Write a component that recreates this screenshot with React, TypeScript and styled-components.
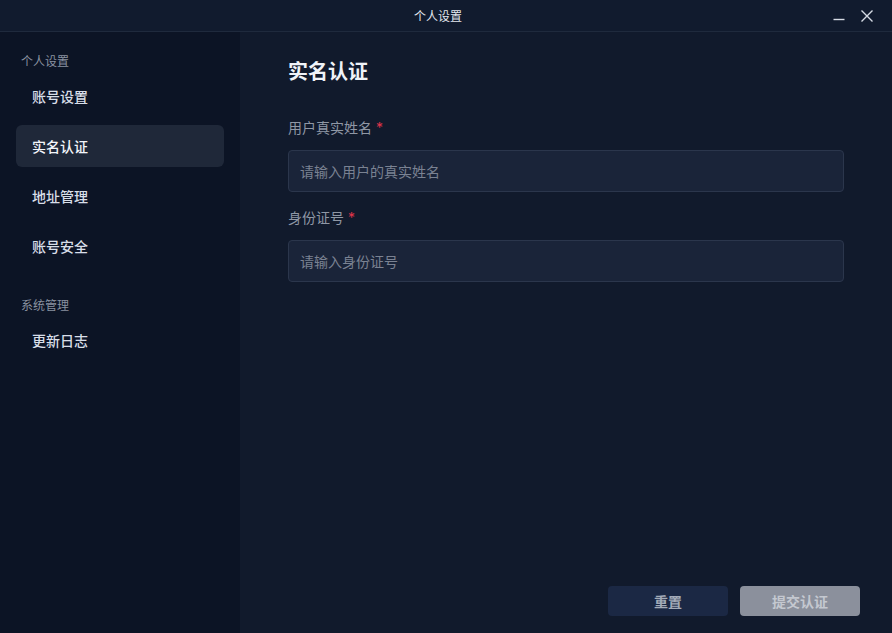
import React from 'react';
import styled, { createGlobalStyle } from 'styled-components';

const GlobalStyle = createGlobalStyle`
  html, body {
    margin: 0;
    padding: 0;
    background: #111a2c;
  }
  body {
    font-family: Inter, "Noto Sans CJK SC", "Noto Sans", sans-serif;
  }
  * { box-sizing: border-box; }
`;

const Window = styled.div`
  width: 892px;
  height: 633px;
  display: flex;
  flex-direction: column;
  background: #111a2c;
  overflow: hidden;
`;

const TitleBar = styled.div`
  position: relative;
  height: 32px;
  flex-shrink: 0;
  display: flex;
  align-items: center;
  justify-content: center;
  padding-right: 16px;
  background: #111b2e;
  border-bottom: 1px solid #1f2a3d;
  color: #e4e8ef;
  font-size: 12px;
`;

const WindowControls = styled.div`
  position: absolute;
  right: 16px;
  top: 0;
  height: 32px;
  display: flex;
  align-items: center;
  gap: 10px;
  color: #d6dbe4;
`;

const ControlButton = styled.button`
  width: 18px;
  height: 18px;
  padding: 0;
  border: none;
  background: transparent;
  color: inherit;
  display: flex;
  align-items: center;
  justify-content: center;
  cursor: pointer;
`;

const Body = styled.div`
  flex: 1;
  display: flex;
  min-height: 0;
`;

const Sidebar = styled.nav`
  width: 240px;
  flex-shrink: 0;
  background: #0c1425;
  padding: 21px 16px 0;
  display: flex;
  flex-direction: column;
`;

const GroupTitle = styled.div`
  font-size: 12px;
  color: #8991a0;
  padding-left: 5px;
  height: 18px;
  line-height: 18px;
  margin-bottom: 4px;
`;

const MenuItem = styled.div<{ $active?: boolean }>`
  height: 42px;
  margin-bottom: 8px;
  padding-left: 16px;
  display: flex;
  align-items: center;
  border-radius: 6px;
  font-size: 14px;
  font-weight: 500;
  color: ${p => (p.$active ? '#f2f5fa' : '#d8dee8')};
  background: ${p => (p.$active ? '#1f2839' : 'transparent')};
  cursor: pointer;
`;

const Group = styled.div`
  margin-bottom: 22px;
`;

const Main = styled.main`
  flex: 1;
  display: flex;
  flex-direction: column;
  padding: 26px 32px 17px 48px;
`;

const PageTitle = styled.h1`
  margin: 0 0 32px;
  font-size: 20px;
  line-height: 28px;
  font-weight: 700;
  color: #f0f3f8;
`;

const Form = styled.div`
  display: flex;
  flex-direction: column;
  width: 556px;
`;

const Field = styled.div`
  display: flex;
  flex-direction: column;
  margin-bottom: 16px;
`;

const Label = styled.label`
  font-size: 14px;
  line-height: 20px;
  color: #8f97a5;
  margin-bottom: 12px;

  span {
    color: #e0344a;
    margin-left: 4px;
  }
`;

const Input = styled.input`
  height: 42px;
  width: 100%;
  padding: 0 11px;
  border: 1px solid #2b364c;
  border-radius: 4px;
  background: #1a2439;
  color: #e4e8ef;
  font-family: inherit;
  font-size: 14px;
  outline: none;

  &::placeholder {
    color: #7a8292;
  }
`;

const Spacer = styled.div`
  flex: 1;
`;

const Actions = styled.div`
  display: flex;
  justify-content: flex-end;
  gap: 12px;
`;

const ActionButton = styled.button<{ $primary?: boolean }>`
  width: 120px;
  height: 30px;
  border: none;
  border-radius: 4px;
  font-family: inherit;
  font-size: 14px;
  font-weight: 700;
  background: ${p => (p.$primary ? '#8b909c' : '#1b2844')};
  color: ${p => (p.$primary ? '#c4c8d0' : '#a3abb8')};
  cursor: pointer;
`;

export default function App() {
  return (
    <>
      <GlobalStyle />
      <Window>
        <TitleBar>
          个人设置
          <WindowControls>
            <ControlButton aria-label="最小化">
              <svg width="14" height="14" viewBox="0 0 14 14">
                <path d="M1.5 10.5h11" stroke="currentColor" strokeWidth="1.4" />
              </svg>
            </ControlButton>
            <ControlButton aria-label="关闭">
              <svg width="14" height="14" viewBox="0 0 14 14">
                <path d="M1.5 1.5l11 11M12.5 1.5l-11 11" stroke="currentColor" strokeWidth="1.4" />
              </svg>
            </ControlButton>
          </WindowControls>
        </TitleBar>
        <Body>
          <Sidebar>
            <Group>
              <GroupTitle>个人设置</GroupTitle>
              <MenuItem>账号设置</MenuItem>
              <MenuItem $active>实名认证</MenuItem>
              <MenuItem>地址管理</MenuItem>
              <MenuItem>账号安全</MenuItem>
            </Group>
            <Group>
              <GroupTitle>系统管理</GroupTitle>
              <MenuItem>更新日志</MenuItem>
            </Group>
          </Sidebar>
          <Main>
            <PageTitle>实名认证</PageTitle>
            <Form>
              <Field>
                <Label>
                  用户真实姓名<span>*</span>
                </Label>
                <Input placeholder="请输入用户的真实姓名" />
              </Field>
              <Field>
                <Label>
                  身份证号<span>*</span>
                </Label>
                <Input placeholder="请输入身份证号" />
              </Field>
            </Form>
            <Spacer />
            <Actions>
              <ActionButton>重置</ActionButton>
              <ActionButton $primary>提交认证</ActionButton>
            </Actions>
          </Main>
        </Body>
      </Window>
    </>
  );
}
